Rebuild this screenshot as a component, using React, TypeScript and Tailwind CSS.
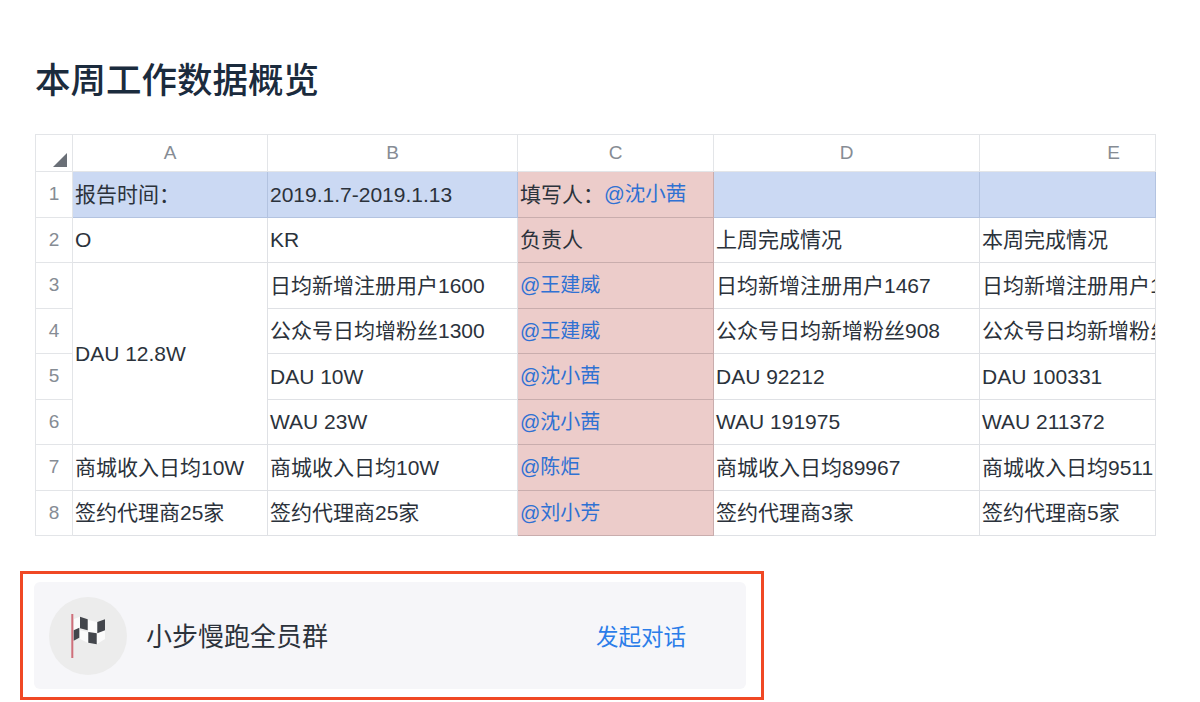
import React from 'react';

const font = "font-['Liberation_Sans','Noto_Sans_CJK_SC',sans-serif]";

type Row = { no: number; a?: string; b: string; c: string; d: string; e: string; at?: boolean };

const rows: Row[] = [
  { no: 2, a: 'O', b: 'KR', c: '负责人', d: '上周完成情况', e: '本周完成情况' },
  { no: 3, b: '日均新增注册用户1600', c: '@王建威', d: '日均新增注册用户1467', e: '日均新增注册用户1', at: true },
  { no: 4, b: '公众号日均增粉丝1300', c: '@王建威', d: '公众号日均新增粉丝908', e: '公众号日均新增粉丝', at: true },
  { no: 5, b: 'DAU 10W', c: '@沈小茜', d: 'DAU 92212', e: 'DAU 100331', at: true },
  { no: 6, b: 'WAU 23W', c: '@沈小茜', d: 'WAU 191975', e: 'WAU 211372', at: true },
  { no: 7, a: '商城收入日均10W', b: '商城收入日均10W', c: '@陈炬', d: '商城收入日均89967', e: '商城收入日均9511', at: true },
  { no: 8, a: '签约代理商25家', b: '签约代理商25家', c: '@刘小芳', d: '签约代理商3家', e: '签约代理商5家', at: true },
];

const cell = 'flex items-center overflow-hidden whitespace-nowrap pl-[2px] border-r border-b border-[#dfe1e5] text-[21px] text-[#2b323b]';
const pink = 'flex items-center overflow-hidden whitespace-nowrap pl-[2px] border-r border-b border-[#c9adad] bg-[#ecccca]';
const head = 'flex items-center justify-center border-r border-b border-[#e3e5e8] text-[19px] text-[#868c94]';
const blue = 'flex items-center overflow-hidden whitespace-nowrap pl-[2px] border-r border-b border-[#b3c3e0] bg-[#cbd9f3] text-[21px] text-[#2b323b]';

const App: React.FC = () => {
  return (
    <div className={`${font} w-[1200px] h-[702px] overflow-hidden bg-white pl-[35px] pt-[59px]`}>
      <h1 className="h-[45px] text-[35.5px] leading-[45px] font-medium whitespace-nowrap text-[#1b2b3d]">本周工作数据概览</h1>

      <div className="mt-[30px] grid w-[1121px] grid-cols-[37px_195px_250px_196px_266px_176px] grid-rows-[37px_repeat(8,45.5px)] border-t border-l border-[#e3e5e8]">
        <div className="flex items-end justify-end border-r border-b border-[#e3e5e8] pr-[5px] pb-[4px]">
          <svg width="14" height="14" viewBox="0 0 14 14">
            <path d="M14 0V14H0Z" fill="#6a6f77" />
          </svg>
        </div>
        <div className={head}>A</div>
        <div className={head}>B</div>
        <div className={head}>C</div>
        <div className={head}>D</div>
        <div className={`${head} pl-[92px]`}>E</div>

        <div className={head}>1</div>
        <div className={blue}>报告时间：</div>
        <div className={blue}>2019.1.7-2019.1.13</div>
        <div className={`${pink} text-[21px] text-[#2b323b]`}>
          填写人：<span className="text-[20.5px] text-[#2f71d3]">@沈小茜</span>
        </div>
        <div className={blue}></div>
        <div className={blue}></div>

        {rows.map((r) => (
          <React.Fragment key={r.no}>
            <div className={head}>{r.no}</div>
            {r.no === 3 && <div className={`${cell} row-span-4`}>DAU 12.8W</div>}
            {r.a && <div className={cell}>{r.a}</div>}
            <div className={cell}>{r.b}</div>
            <div className={`${pink} ${r.at ? 'text-[20px] text-[#2f71d3]' : 'text-[21px] text-[#2b323b]'}`}>{r.c}</div>
            <div className={cell}>{r.d}</div>
            <div className={cell}>{r.e}</div>
          </React.Fragment>
        ))}
      </div>

      <div className="mt-[35px] -ml-[15px] h-[129px] w-[744px] border-[3px] border-[#f04824] pt-[8px] pl-[11px]">
        <div className="flex h-[107px] w-[712px] items-center rounded-[6px] bg-[#f6f6f9] pl-[15px] pr-[60px]">
          <div className="flex h-[78px] w-[78px] items-center justify-center rounded-full bg-[#ececec]">
            <svg width="40" height="46" viewBox="0 0 40 46">
              <path d="M6 6 L12 3.7 L12 15 L6 17Z M12 17.3 L20 19 L20 30 L12 26Z M20 7 L29 9 L29 20 L20 19Z M29 20 L37 17 L37 26 L29 31Z" fill="#ffffff" fillOpacity="0.8" />
              <path d="M4.3 1V45" stroke="#cf6f7a" strokeWidth="2" fill="none" />
              <path d="M5.7 17.3 L11.3 14.7 L11.3 24.7 L5.7 27.7Z M12 3.7 L19.7 6.3 L19.7 17.3 L12 15.3Z M20.3 19 L28.7 20.3 L28.7 31.3 L20.3 29.7Z M29.3 9 L37 6.3 L37 17.3 L29.3 20.3Z" fill="#43464c" />
            </svg>
          </div>
          <div className="ml-[19px] flex-1 pt-[4px] text-[26px] text-[#2b323b]">小步慢跑全员群</div>
          <div className="pt-[4px] text-[22.5px] text-[#2b7de9]">发起对话</div>
        </div>
      </div>
    </div>
  );
};

export default App;
